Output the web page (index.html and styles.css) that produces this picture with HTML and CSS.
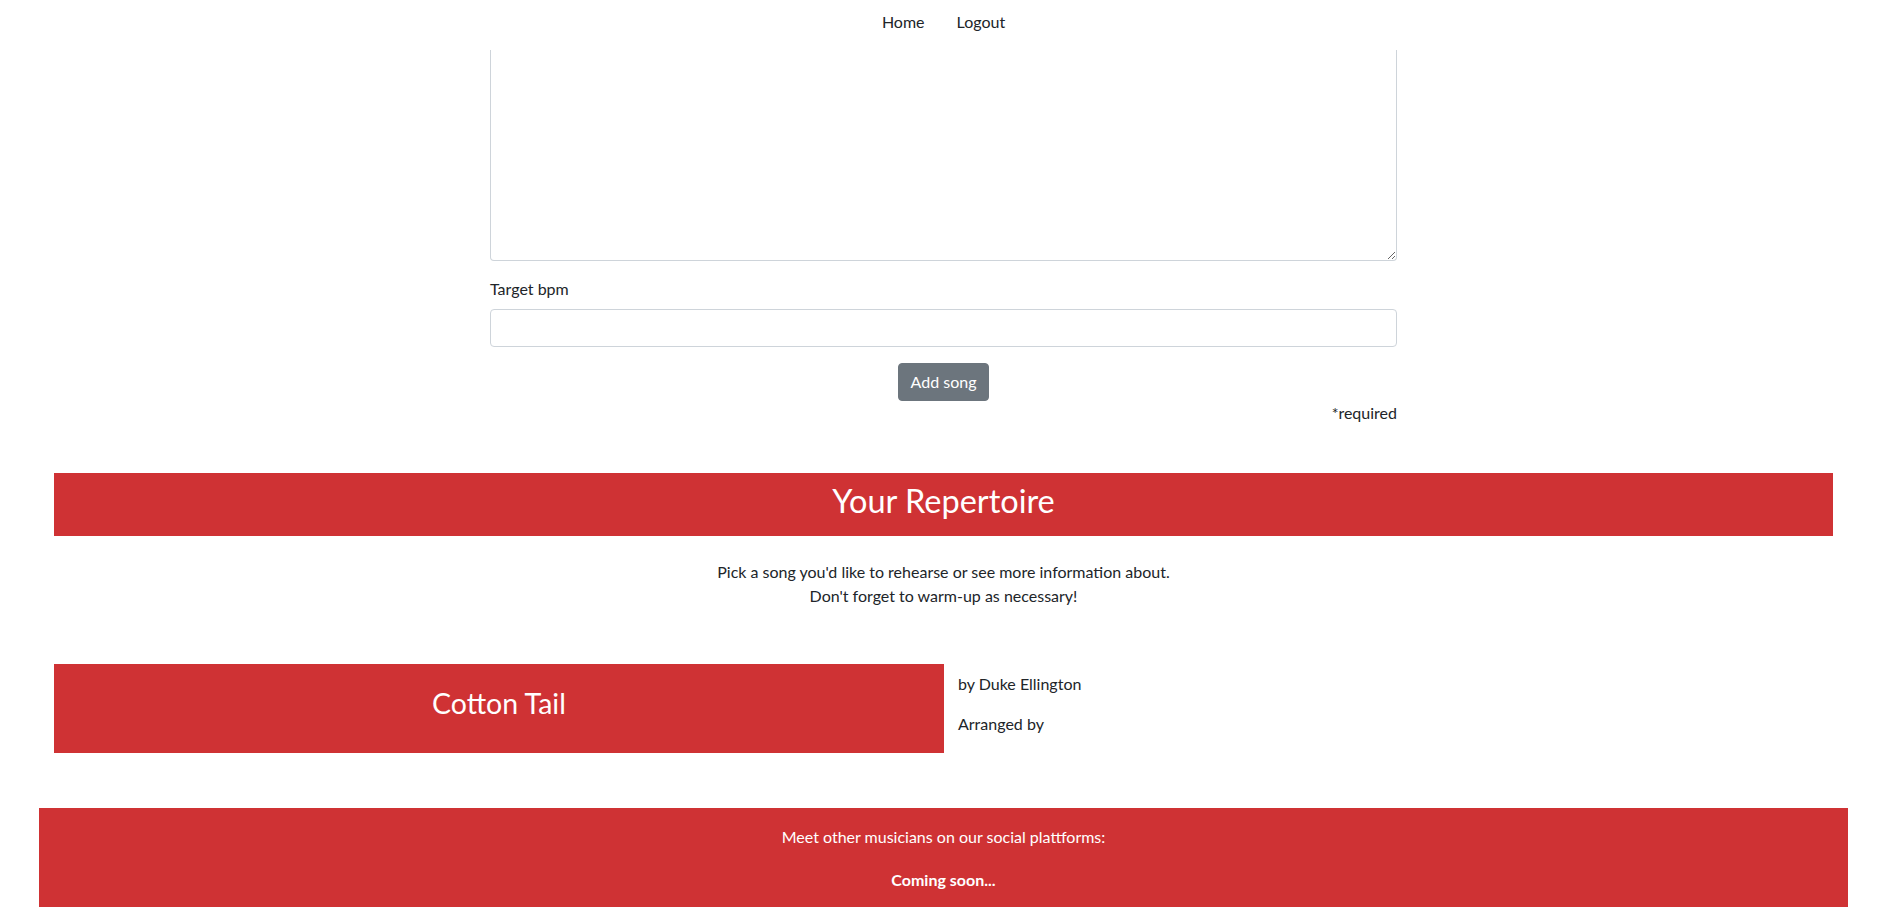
FILE: index.html
```html
<!DOCTYPE html>
<html lang="en">
<head>
<meta charset="utf-8">
<title>Your Repertoire</title>
<link rel="stylesheet" href="styles.css">
</head>
<body>
<nav class="topnav">
  <a class="nav-link" href="#">Home</a>
  <a class="nav-link" href="#">Logout</a>
</nav>
<main class="page">
  <form class="song-form">
    <textarea class="form-control notes"></textarea>
    <label class="form-label" for="bpm">Target bpm</label>
    <input class="form-control bpm" id="bpm" type="text">
    <div class="btn-row"><button type="button" class="btn">Add song</button></div>
    <p class="required">*required</p>
  </form>

  <section class="repertoire">
    <h2 class="section-title">Your Repertoire</h2>
    <p class="intro">Pick a song you'd like to rehearse or see more information about.<br>Don't forget to warm-up as necessary!</p>
    <div class="song-row">
      <div class="song-title"><h3>Cotton Tail</h3></div>
      <div class="song-info">
        <p>by Duke Ellington</p>
        <p>Arranged by</p>
      </div>
    </div>
  </section>

  <footer class="footer">
    <p class="footer-line">Meet other musicians on our social plattforms:</p>
    <p class="footer-soon">Coming soon...</p>
  </footer>
</main>
</body>
</html>
```

FILE: styles.css
```css
* { box-sizing: border-box; }
html, body { margin: 0; padding: 0; }
body {
  font-family: Lato, "Open Sans", sans-serif;
  font-size: 16px;
  line-height: 24px;
  color: #212529;
  background: #fff;
  padding-left: 4px;
  overflow: hidden;
}
.topnav {
  height: 50px;
  display: flex;
  justify-content: center;
  align-items: flex-start;
  padding-top: 10px;
}
.nav-link {
  color: #212529;
  text-decoration: none;
  padding: 0 16px;
  line-height: 24px;
}
.song-form {
  width: 907px;
  margin: 0 auto;
}
.form-control {
  display: block;
  width: 100%;
  border: 1px solid #ced4da;
  border-radius: 4px;
  font-family: inherit;
  font-size: 16px;
  background: #fff;
}
.notes {
  height: 211px;
  border-top: 0;
  border-radius: 0 0 4px 4px;
  margin: 0 0 16px;
}
.form-label {
  display: block;
  margin-bottom: 8px;
}
.bpm {
  height: 38px;
  margin-bottom: 16px;
}
.btn-row {
  display: flex;
  justify-content: center;
}
.btn {
  font-family: inherit;
  font-size: 16px;
  line-height: 24px;
  height: 38px;
  padding: 6px 12px;
  color: #fff;
  background: #6c757d;
  border: 1px solid #6c757d;
  border-radius: 4px;
}
.required {
  text-align: right;
  margin: 0;
}
.repertoire {
  margin-top: 48px;
}
.section-title {
  margin: 0 50px;
  background: #cf3234;
  color: #fff;
  text-align: center;
  font-weight: 400;
  font-size: 32.5px;
  line-height: 39px;
  padding: 8px 0 16px;
}
.intro {
  text-align: center;
  margin: 24px 0 56px;
}
.song-row {
  display: grid;
  grid-template-columns: 890px 1fr;
  margin: 0 50px;
}
.song-title {
  background: #cf3234;
  color: #fff;
  height: 89px;
  display: flex;
  align-items: center;
  justify-content: center;
}
.song-title h3 {
  margin: 0;
  padding-bottom: 11px;
  font-weight: 400;
  font-size: 28.5px;
  line-height: 34px;
}
.song-info {
  padding: 8px 14px 0;
}
.song-info p {
  margin: 0 0 16px;
}
.footer {
  margin: 55px 35px 0;
  background: #cf3234;
  color: #fff;
  text-align: center;
  padding: 17px 0 40px;
}
.footer-line {
  margin: 0 0 19px;
}
.footer-soon {
  margin: 0;
  font-weight: 700;
}
```
